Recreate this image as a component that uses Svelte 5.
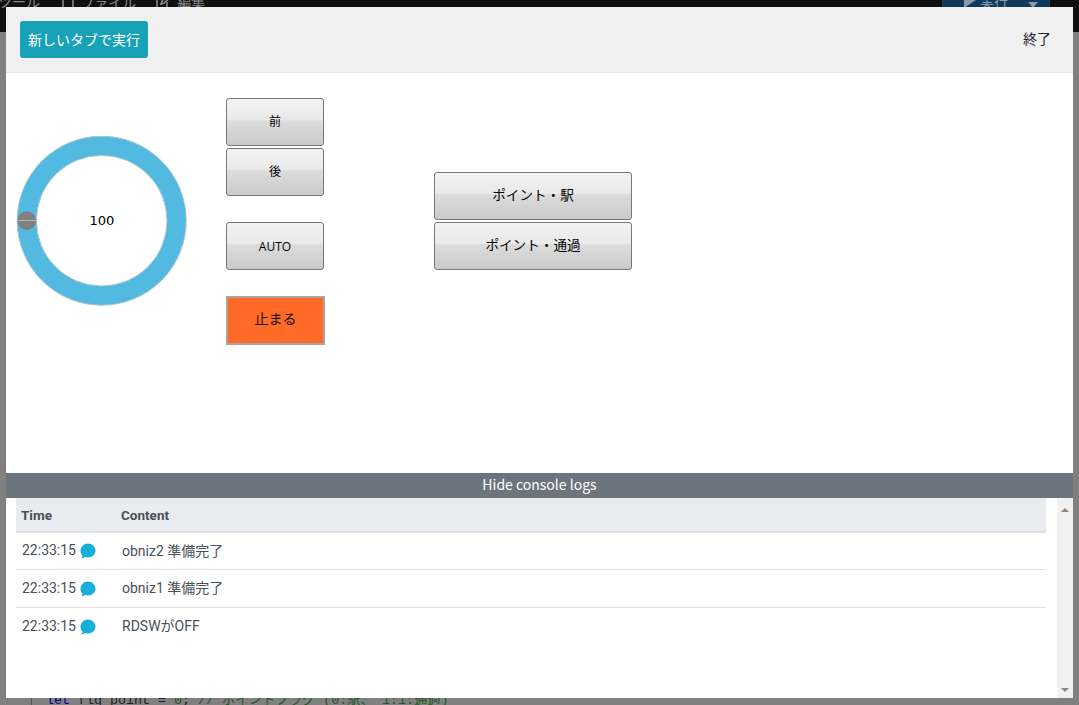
<script lang="ts">
  const logs = [
    { time: '22:33:15', text: 'obniz2 準備完了' },
    { time: '22:33:15', text: 'obniz1 準備完了' },
    { time: '22:33:15', text: 'RDSWがOFF' }
  ];
</script>

<div class="page">
  <div class="ide-bar">
    <span class="tool">ツール</span>
    <span class="menu">
      <svg width="12" height="16" viewBox="0 0 12 16"><path d="M1 1h6l4 4v10H1z" fill="none" stroke="#8a8a8a" stroke-width="1.500" /></svg>
      ファイル
    </span>
    <span class="menu edit">
      <svg width="16" height="16" viewBox="0 0 16 16"><path d="M2 4h7M2 4v10h10V8M6 10l1-3 7-6 2 2-7 6z" fill="none" stroke="#8a8a8a" stroke-width="1.500" /></svg>
      編集
    </span>
    <span class="run">
      <svg width="14" height="16" viewBox="0 0 14 16"><path d="M1 0l12 8-12 8z" fill="#8a9aa8" /></svg>
      実行
      <svg class="caret" width="10" height="6" viewBox="0 0 10 6"><path d="M0 0h10L5 6z" fill="#8a9aa8" /></svg>
    </span>
  </div>
  <div class="code-line"><span class="kw">let</span> flg point = <span class="num">0</span>; <span class="cm">// ポイントフラグ (0:駅、 1:1:通過)</span></div>
  <div class="gutter"></div>

  <div class="modal">
    <header class="top">
      <button class="btn-tab">新しいタブで実行</button>
      <span class="close">終了</span>
    </header>

    <main class="controls">
      <div class="dial">
        <svg width="172" height="172" viewBox="0 0 172 172">
          <circle cx="85.700" cy="84.700" r="74.900" fill="none" stroke="#52b9e0" stroke-width="19.200" />
          <circle cx="85.700" cy="84.700" r="84.500" fill="none" stroke="#a9c4d0" stroke-width="1" />
          <circle cx="85.700" cy="84.700" r="65.300" fill="none" stroke="#a9c4d0" stroke-width="1" />
          <circle cx="10.700" cy="84.700" r="9.400" fill="#808080" />
          <line x1="1" y1="84.500" x2="21" y2="84.500" stroke="#b5b5b5" />
        </svg>
        <span class="dial-value">100</span>
      </div>

      <div class="col-drive">
        <button class="gray">前</button>
        <button class="gray">後</button>
        <button class="gray auto">AUTO</button>
        <button class="stop">止まる</button>
      </div>

      <div class="col-point">
        <button class="gray wide">ポイント・駅</button>
        <button class="gray wide">ポイント・通過</button>
      </div>
    </main>

    <div class="console-bar">Hide console logs</div>

    <section class="console">
      <div class="log-wrap">
        <table>
          <thead><tr><th class="t-time">Time</th><th>Content</th></tr></thead>
          <tbody>
            {#each logs as row}
              <tr>
                <td>{row.time}
                  <svg class="bubble" width="16" height="16" viewBox="0 0 16 16">
                    <path d="M8 .5C3.800.5.500 3.800.500 7.800c0 2 .8 3.700 2.100 5-.2.900-.7 1.800-1.400 2.500 1.400 0 2.800-.5 3.900-1.300.9.300 1.900.5 2.900.5 4.200 0 7.500-3 7.500-6.700S12.200.5 8 .5z" fill="#17aed8" />
                  </svg>
                </td>
                <td>{row.text}</td>
              </tr>
            {/each}
          </tbody>
        </table>
      </div>
      <div class="scrollbar">
        <span class="arrow up"></span>
        <span class="arrow down"></span>
      </div>
    </section>
  </div>
</div>

<style>
  :global(body) { margin:0; }
  .page       { position:relative; width:1079px; height:705px; background:#808080; overflow:hidden; font-family:"Noto Sans CJK JP","Noto Sans",sans-serif; }
  .ide-bar    { height:32px; background:#101010; color:#8a8a8a; font-size:14px; display:flex; align-items:flex-start; line-height:14px; }
  .ide-bar svg { margin-right:3px; vertical-align:-2px; }
  .tool       { margin:-6px 0 0 -2px; }
  .menu       { margin:-6px 0 0 22px; }
  .edit       { margin-left:19px; }
  .run        { margin:0 29px 0 auto; background:#0f3a5c; width:108px; height:14px; padding-left:38px; box-sizing:border-box; color:#8a9aa8; position:relative; line-height:2px; }
  .run svg:first-child { position:absolute; left:21px; top:-8px; }
  .caret      { position:absolute; left:86px; top:2px; }
  .code-line  { position:absolute; left:46px; top:694px; font:13.33px/14px "Liberation Mono","Noto Sans CJK JP",monospace; color:#222; white-space:nowrap; }
  .gutter     { position:absolute; left:31px; top:698px; height:7px; border-left:1px solid #555; }
  .kw         { color:#00008b; }
  .num        { color:#166016; }
  .cm         { color:#1f5a1f; }

  .modal      { position:absolute; left:6px; top:7px; width:1067px; height:691px; background:#fff; display:flex; flex-direction:column; }
  .top        { height:65px; flex:none; background:#f0f0f0; border-bottom:1px solid #e6e6e6; display:flex; align-items:center; justify-content:space-between; padding:0 22px 0 14px; }
  .btn-tab    { width:128px; height:37px; margin-top:-1px; background:#17a2b8; color:#fff; border:0; border-radius:3px; font:14px "Noto Sans CJK JP",sans-serif; padding:0; }
  .close      { font-size:14px; line-height:14px; color:#212529; margin-top:-3px; }

  .controls   { height:400px; flex:none; display:flex; align-items:flex-start; padding-left:10px; box-sizing:border-box; }
  .dial       { position:relative; width:172px; height:172px; margin-top:63px; flex:none; }
  .dial svg   { display:block; }
  .dial-value { position:absolute; left:0; right:0; top:77px; text-align:center; font:13px/16px "DejaVu Sans",sans-serif; color:#000; }
  .col-drive  { margin:25px 0 0 38px; width:99px; display:flex; flex-direction:column; gap:2px; flex:none; }
  .col-point  { margin:99px 0 0 109px; display:flex; flex-direction:column; gap:2px; }

  button.gray { width:98px; height:48px; padding:0 0 4px; border:1px solid #777; border-radius:3px; color:#000; font:12px "Noto Sans CJK JP",sans-serif; background:linear-gradient(#f3f3f3 0%, #e9e9e9 46%, #dcdcdc 47%, #cacaca 100%); }
  button.auto { margin-top:24px; padding:0; font-family:"Open Sans",sans-serif; font-size:12px; }
  button.wide { width:198px; font-size:13.600px; }
  .stop       { width:99px; height:49px; margin-top:24px; padding:0 0 5px; background:#ff6a26; border:2px solid #ada29c; color:#111; font:14px "Noto Sans CJK JP",sans-serif; }

  .console-bar { height:25px; flex:none; background:#6c757d; color:#fff; font-size:14px; line-height:23px; text-align:center; }
  .console     { flex:1; display:flex; min-height:0; }
  .log-wrap    { flex:1; padding:0 11px 0 10px; }
  table        { width:100%; border-collapse:collapse; color:#495057; font-family:Roboto,"Noto Sans CJK JP",sans-serif; font-size:14px; line-height:16px; }
  th           { height:33px; background:#e9ecef; border-bottom:2px solid #dee2e6; text-align:left; padding:0 5px; font-size:13.500px; font-weight:700; }
  td           { height:38px; box-sizing:border-box; border-bottom:1px solid #dee2e6; padding:0 5px 0 6px; white-space:nowrap; }
  tbody tr:first-child td { height:37px; }
  tbody tr:last-child td { border-bottom:0; }
  .t-time      { width:90px; }
  .bubble      { vertical-align:-4px; margin-left:1px; }
  .scrollbar   { width:16px; flex:none; background:#f1f1f1; display:flex; flex-direction:column; justify-content:space-between; align-items:center; padding:10px 0 6px; box-sizing:border-box; }
  .arrow       { width:0; height:0; border-left:4px solid transparent; border-right:4px solid transparent; }
  .up          { border-bottom:4px solid #8a8a8a; }
  .down        { border-top:4px solid #8a8a8a; }
</style>
